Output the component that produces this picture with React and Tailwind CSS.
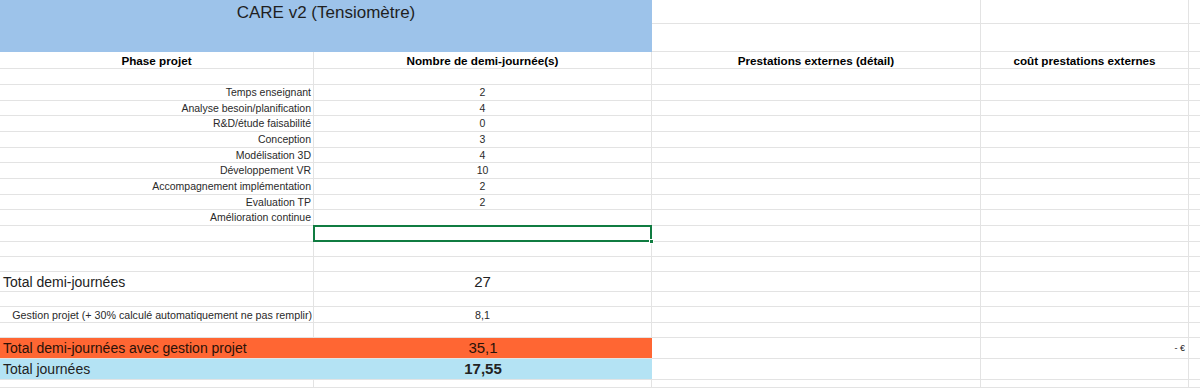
const W = [314, 338, 329, 208];
const font = { fontFamily: '"Liberation Sans", Arial, sans-serif' };

const phases = [
  ["Temps enseignant", "2"],
  ["Analyse besoin/planification", "4"],
  ["R&D/étude faisabilité", "0"],
  ["Conception", "3"],
  ["Modélisation 3D", "4"],
  ["Développement VR", "10"],
  ["Accompagnement implémentation", "2"],
  ["Evaluation TP", "2"],
  ["Amélioration continue", ""],
];

const heights = [16, 15, 16, 16, 15, 16, 16, 15, 16];

const Cell = ({ w, className = "", children }) => (
  <div
    className={`shrink-0 h-full border-r border-b border-[#e3e3e3] flex items-center overflow-visible whitespace-nowrap ${className}`}
    style={{ width: w }}
  >
    {children}
  </div>
);

const Rest = () => (
  <div className="flex-1 h-full border-b border-[#e3e3e3]" />
);

const EmptyRow = ({ h }) => (
  <div className="flex" style={{ height: h }}>
    <Cell w={W[0]} />
    <Cell w={W[1]} />
    <Cell w={W[2]} />
    <Cell w={W[3]} />
    <Rest />
  </div>
);

export default function App() {
  return (
    <div className="w-[1200px] h-[388px] overflow-hidden bg-white text-[#222]" style={font}>
      {/* title */}
      <div className="flex h-[52px]">
        <div className="w-[652px] shrink-0 bg-[#9dc3ea] flex justify-center pt-[2px]">
          <span className="text-[17px] leading-[22px] text-[#1f1f1f]">CARE v2 (Tensiomètre)</span>
        </div>
        <div className="flex-1 flex flex-col">
          <div className="flex h-[24px]">
            <Cell w={W[2]} />
            <Cell w={W[3]} />
            <Rest />
          </div>
          <div className="flex h-[28px]">
            <Cell w={W[2]} />
            <Cell w={W[3]} />
            <Rest />
          </div>
        </div>
      </div>

      {/* header */}
      <div className="flex h-[17px] text-[11.7px] font-bold text-black">
        <Cell w={W[0]} className="justify-center pt-px">Phase projet</Cell>
        <Cell w={W[1]} className="justify-center pt-px">Nombre de demi-journée(s)</Cell>
        <Cell w={W[2]} className="justify-center pt-px">Prestations externes (détail)</Cell>
        <Cell w={W[3]} className="justify-center pt-px">coût prestations externes</Cell>
        <Rest />
      </div>
      <EmptyRow h={16} />

      {phases.map(([label, val], i) => (
        <div key={label} className="flex text-[10.5px] text-[#2a2a2a]" style={{ height: heights[i] }}>
          <Cell w={W[0]} className="justify-end pr-[2px] pt-px">{label}</Cell>
          <Cell w={W[1]} className="justify-center pt-px">{val}</Cell>
          <Cell w={W[2]} />
          <Cell w={W[3]} />
          <Rest />
        </div>
      ))}

      {/* selected cell row */}
      <div className="flex h-[16px]">
        <Cell w={W[0]} />
        <div className="relative shrink-0 h-full border-r border-b border-[#e3e3e3]" style={{ width: W[1] }}>
          <div className="absolute -left-px -top-px right-[-1px] bottom-[-1px] border-2 border-[#107c41]" />
          <div className="absolute right-[-3px] bottom-[-3px] w-[5px] h-[5px] bg-[#107c41] border border-white" />
        </div>
        <Cell w={W[2]} />
        <Cell w={W[3]} />
        <Rest />
      </div>
      <EmptyRow h={15} />
      <EmptyRow h={15} />

      {/* total demi-journées */}
      <div className="flex h-[20px] text-[14px]">
        <Cell w={W[0]} className="pl-[3px] pt-px">Total demi-journées</Cell>
        <Cell w={W[1]} className="justify-center pt-px text-[15px]">27</Cell>
        <Cell w={W[2]} />
        <Cell w={W[3]} />
        <Rest />
      </div>
      <EmptyRow h={15} />

      {/* gestion projet */}
      <div className="flex h-[16px] text-[10.7px] text-[#2a2a2a]">
        <Cell w={W[0]} className="justify-end pr-[1px] pt-px">
          Gestion projet (+ 30% calculé automatiquement ne pas remplir)
        </Cell>
        <Cell w={W[1]} className="justify-center pt-px">8,1</Cell>
        <Cell w={W[2]} />
        <Cell w={W[3]} />
        <Rest />
      </div>
      <EmptyRow h={15} />

      {/* total avec gestion */}
      <div className="flex h-[21px] text-[14px] text-[#2b1208]">
        <div className="w-[652px] shrink-0 h-full bg-[#ff6633] border-b border-[#e3e3e3] flex items-center pt-px">
          <div className="w-[314px] pl-[3px] whitespace-nowrap">Total demi-journées avec gestion projet</div>
          <div className="flex-1 text-center text-[15px]">35,1</div>
        </div>
        <Cell w={W[2]} />
        <Cell w={W[3]} className="justify-end pr-[3px] pt-px text-[9px] text-[#222]">- €</Cell>
        <Rest />
      </div>

      {/* total journées */}
      <div className="flex h-[21px] text-[14px]">
        <div className="w-[652px] shrink-0 h-full bg-[#b4e3f4] border-b border-[#e3e3e3] flex items-center pt-px">
          <div className="w-[314px] pl-[3px] whitespace-nowrap">Total journées</div>
          <div className="flex-1 text-center font-bold text-[15px]">17,55</div>
        </div>
        <Cell w={W[2]} />
        <Cell w={W[3]} />
        <Rest />
      </div>
      <EmptyRow h={8} />
    </div>
  );
}
